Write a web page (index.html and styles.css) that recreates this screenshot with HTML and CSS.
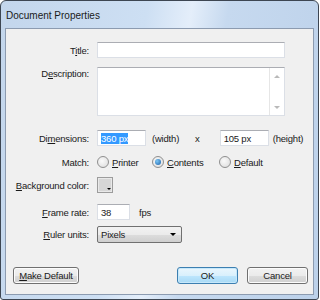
FILE: index.html
```html
<!DOCTYPE html>
<html>
	<head>
		<meta charset="utf-8">
		<title>Document Properties</title>
		<link rel="stylesheet" href="styles.css">
	</head>
	<body>

		<div class="window">
			<div class="titlebar">Document Properties</div>
			<div class="client">
				<div class="form">
					<div class="row row-title">
						<span class="lbl">T<u>i</u>tle:</span>
						<div class="box title-box"></div>
					</div>
					<div class="row row-desc">
						<span class="lbl lbl-top">D<u>e</u>scription:</span>
						<div class="box desc-box">
							<div class="scroll">
								<span class="arr arr-up"></span>
								<span class="arr arr-down"></span>
							</div>
						</div>
					</div>
					<div class="row row-dim">
						<span class="lbl">Di<u>m</u>ensions:</span>
						<div class="box dim-box"><span class="sel">360 px</span></div>
						<span class="txt w-label">(width)</span>
						<span class="txt x-label">x</span>
						<div class="box dim-box">105 px</div>
						<span class="txt h-label">(height)</span>
					</div>
					<div class="row row-match">
						<span class="lbl">Match:</span>
						<label class="opt opt-1"><span class="radio"></span><u>P</u>rinter</label>
						<label class="opt opt-2"><span class="radio on"></span><u>C</u>ontents</label>
						<label class="opt"><span class="radio"></span><u>D</u>efault</label>
					</div>
					<div class="row row-bg">
						<span class="lbl"><u>B</u>ackground color:</span>
						<div class="swatch"><span class="swatch-arr"></span></div>
					</div>
					<div class="row row-fps">
						<span class="lbl"><u>F</u>rame rate:</span>
						<div class="box fps-box">38</div>
						<span class="txt fps-label">fps</span>
					</div>
					<div class="row row-ruler">
						<span class="lbl"><u>R</u>uler units:</span>
						<div class="select">Pixels<span class="sel-arr"></span></div>
					</div>
				</div>

				<div class="buttons">
					<div class="btn btn-make"><u>M</u>ake Default</div>
					<div class="spacer"></div>
					<div class="btn btn-ok">OK</div>
					<div class="btn">Cancel</div>
				</div>
			</div>
		</div>

	</body>
</html>
```

FILE: styles.css
```css
* {
	margin: 0;
	padding: 0;
	box-sizing: border-box;
}

body {
	background: #fff;
	font-family: "Liberation Sans", Arial, sans-serif;
	font-size: 9.5px;
	letter-spacing: -0.2px;
	color: #1a1a1a;
}

u {
	text-decoration: underline;
	text-underline-offset: 1px;
}

.window {
	width: 319px;
	height: 300px;
	border: 1px solid #3d4652;
	border-radius: 6px 6px 3px 3px;
	background: linear-gradient(100deg, #c3d6ec 0%, #cddff3 40%, #e4eefa 52%, #c6d9ef 62%, #bcd1ea 100%);
	display: flex;
	flex-direction: column;
}

.titlebar {
	height: 27px;
	padding: 9px 0 0 5px;
	font-size: 10px;
	letter-spacing: 0;
	color: #1a1a1a;
}

.client {
	flex: 1;
	margin: 0 4px 4px;
	border: 1px solid #8c9bb0;
	background: #f0f0f0;
	display: flex;
	flex-direction: column;
}

.form {
	padding-top: 13px;
}

.row {
	display: flex;
	align-items: center;
	height: 16px;
}

.row-desc {
	height: 49px;
	margin-top: 9px;
	align-items: flex-start;
}

.row-dim {
	margin-top: 14px;
}

.row-match {
	margin-top: 8px;
}

.row-bg {
	margin-top: 7px;
}

.row-fps {
	margin-top: 11px;
}

.row-ruler {
	margin-top: 6px;
}

.lbl {
	width: 83px;
	margin-right: 8px;
	text-align: right;
	white-space: nowrap;
}

.lbl-top {
	padding-top: 1px;
}

.box {
	height: 16px;
	background: #fff;
	border: 1px solid #dbdfe6;
	border-top-color: #abadb3;
	padding: 1px 3px 0;
	line-height: 13px;
}

.title-box {
	width: 188px;
}

.desc-box {
	width: 188px;
	height: 49px;
	display: flex;
	justify-content: flex-end;
	padding: 0;
}

.scroll {
	width: 15px;
	border-left: 1px solid #e6e6e6;
	display: flex;
	flex-direction: column;
	justify-content: space-between;
	align-items: center;
	padding: 7px 0 6px;
}

.arr {
	width: 0;
	height: 0;
	border-left: 3px solid transparent;
	border-right: 3px solid transparent;
}

.arr-up {
	border-bottom: 3px solid #b9b9b9;
}

.arr-down {
	border-top: 3px solid #b9b9b9;
}

.dim-box {
	width: 49px;
}

.sel {
	background: #3399ff;
	color: #fff;
}

.txt {
	white-space: nowrap;
}

.w-label {
	margin-left: 6px;
}

.x-label {
	margin-left: 16px;
	margin-right: 20px;
}

.h-label {
	margin-left: 4px;
}

.opt {
	display: flex;
	align-items: center;
	white-space: nowrap;
}

.opt-1 {
	width: 55px;
}

.opt-2 {
	width: 67px;
}

.radio {
	width: 12px;
	height: 12px;
	border-radius: 50%;
	border: 1px solid #8f8f8f;
	background: radial-gradient(circle at 40% 40%, #fafafa, #dadada);
	margin-right: 3px;
	display: flex;
	align-items: center;
	justify-content: center;
}

.radio.on::after {
	content: "";
	width: 6px;
	height: 6px;
	border-radius: 50%;
	background: radial-gradient(circle at 35% 35%, #7bc6f5, #1b5fa8);
}

.swatch {
	width: 16px;
	height: 16px;
	border: 1px solid #9c9c9c;
	background: #d6d6d6;
	box-shadow: inset 0 0 0 1px #e9e9e9;
	position: relative;
}

.swatch-arr {
	position: absolute;
	right: 1px;
	bottom: 2px;
	border-left: 2px solid transparent;
	border-right: 2px solid transparent;
	border-top: 2px solid #000;
}

.fps-box {
	width: 33px;
}

.fps-label {
	margin-left: 9px;
}

.select {
	width: 85px;
	height: 17px;
	border: 1px solid #707070;
	border-radius: 2px;
	background: linear-gradient(#f2f2f2 0%, #ebebeb 50%, #dddddd 51%, #cfcfcf 100%);
	display: flex;
	align-items: center;
	justify-content: space-between;
	padding: 0 5px 0 3px;
}

.sel-arr {
	border-left: 3px solid transparent;
	border-right: 3px solid transparent;
	border-top: 3px solid #000;
}

.buttons {
	display: flex;
	margin-top: 25px;
	padding: 0 5px 0 7px;
	gap: 9px;
}

.spacer {
	flex: 1;
}

.btn {
	width: 61px;
	height: 17px;
	border: 1px solid #707070;
	border-radius: 3px;
	background: linear-gradient(#f2f2f2 0%, #ebebeb 50%, #dddddd 51%, #cfcfcf 100%);
	box-shadow: inset 0 0 0 1px #fcfcfc;
	display: flex;
	align-items: center;
	justify-content: center;
}

.btn-make {
	width: 66px;
}

.btn-ok {
	border-color: #3c7fb1;
	background: linear-gradient(#eaf6fd 0%, #d9f0fc 50%, #bee6fd 51%, #a7d9f5 100%);
	box-shadow: inset 0 0 0 1px #c6e8fb;
}
```
